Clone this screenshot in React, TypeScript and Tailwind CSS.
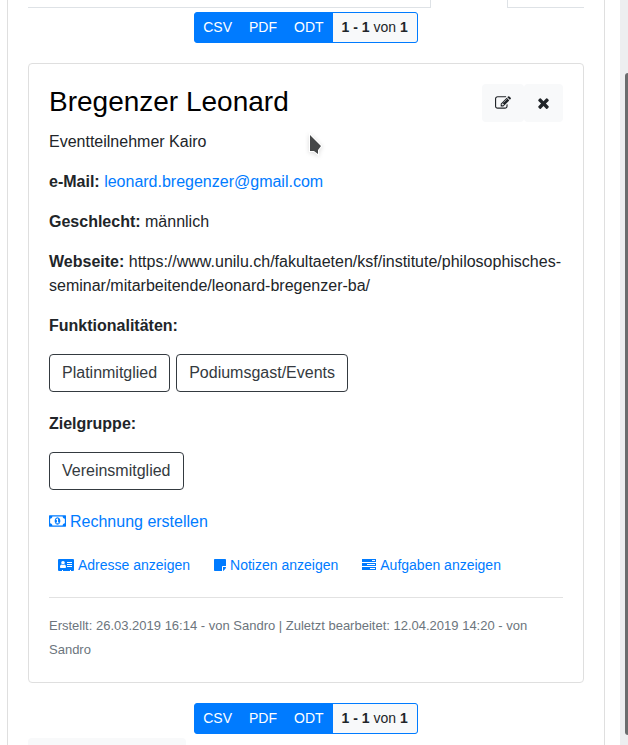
import type { ReactNode } from "react";

type IconProps = { className: string };

function EditIcon({ className }: IconProps) {
  return (
    <svg className={className} viewBox="0 0 1792 1792" fill="currentColor" aria-hidden="true">
      <path d="M888 1184l116-116-152-152-116 116v56h96v96h56zm440-720q-16-16-33 1l-350 350q-17 17-1 33t33-1l350-350q17-17 1-33zm80 594v190q0 119-84.5 203.5t-203.5 84.5h-832q-119 0-203.5-84.5t-84.5-203.5v-832q0-119 84.5-203.5t203.5-84.5h832q63 0 117 25 15 7 18 23 3 17-9 29l-49 49q-14 14-32 8-23-6-45-6h-832q-66 0-113 47t-47 113v832q0 66 47 113t113 47h832q66 0 113-47t47-113v-126q0-13 9-22l64-64q15-15 35-7t20 29zm-96-738l288 288-672 672h-288v-288zm444 132l-92 92-288-288 92-92q28-28 68-28t68 28l152 152q28 28 28 68t-28 68z" />
    </svg>
  );
}

function CloseIcon({ className }: IconProps) {
  return (
    <svg className={className} viewBox="192 0 1408 1792" fill="currentColor" aria-hidden="true">
      <path d="M1490 1322q0 40-28 68l-136 136q-28 28-68 28t-68-28l-294-294-294 294q-28 28-68 28t-68-28l-136-136q-28-28-28-68t28-68l294-294-294-294q-28-28-28-68t28-68l136-136q28-28 68-28t68 28l294 294 294-294q28-28 68-28t68 28l136 136q28 28 28 68t-28 68l-294 294 294 294q28 28 28 68z" />
    </svg>
  );
}

function MoneyIcon({ className }: IconProps) {
  return (
    <svg className={className} viewBox="0 0 1920 1792" fill="currentColor" aria-hidden="true">
      <path d="M768 1152h384v-96h-128v-448h-114l-148 137 77 80q42-37 55-57h2v288h-128v96zm512-256q0 70-21 142t-59.5 134-101.5 101-138 39-138-39-101.5-101-59.5-134-21-142 21-142 59.5-134 101.5-101 138-39 138 39 101.5 101 59.5 134 21 142zm512 256v-512q-106 0-181-75t-75-181h-1152q0 106-75 181t-181 75v512q106 0 181 75t75 181h1152q0-106 75-181t181-75zm128-832v1152q0 26-19 45t-45 19h-1792q-26 0-45-19t-19-45v-1152q0-26 19-45t45-19h1792q26 0 45 19t19 45z" />
    </svg>
  );
}

function AddressIcon({ className }: IconProps) {
  return (
    <svg className={className} viewBox="0 0 16 14" aria-hidden="true">
      <path
        fill="currentColor"
        d="M1 1h14a1 1 0 0 1 1 1v10a1 1 0 0 1-1 1h-2v-1h-1v1H5v-1H4v1H1a1 1 0 0 1-1-1V2a1 1 0 0 1 1-1z"
      />
      <circle cx="5" cy="4.8" r="1.8" fill="#fff" />
      <path fill="#fff" d="M2 9.2c0-1.700.7-2.700 1.600-2.700.8.7 2 .7 2.800 0C7.300 6.500 8 7.500 8 9.200c0 .5-.3.8-.8.8H2.800c-.5 0-.8-.3-.8-.8zM9 4h5v1H9zM9 6h5v1H9zM9 8h5v1H9z" />
    </svg>
  );
}

function NoteIcon({ className }: IconProps) {
  return (
    <svg className={className} viewBox="0 0 12 14" fill="currentColor" aria-hidden="true">
      <path d="M.8 1h10.400a.8.8 0 0 1 .8.8V8H8.800a.8.8 0 0 0-.8.8V13H.8a.8.8 0 0 1-.8-.8V1.800A.8.8 0 0 1 .8 1zM9 9h3c0 .8-.3 1.400-.8 2l-1.200 1.200c-.3.400-.7.6-1 .7z" />
    </svg>
  );
}

function TasksIcon({ className }: IconProps) {
  return (
    <svg className={className} viewBox="0 0 14 14" aria-hidden="true">
      <path fill="currentColor" d="M0 1h14v3H0zM0 5h14v3H0zM0 9h14v3H0z" />
      <path fill="#fff" d="M10 2h3v1h-3zM5 6h8v1H5zM8 10h5v1H8z" />
    </svg>
  );
}

const exportFormats = ["CSV", "PDF", "ODT"];

function ExportBar() {
  return (
    <div className="flex justify-center">
      <div className="flex gap-px overflow-hidden rounded-[3px] border border-[#007bff] bg-[#007bff] text-sm leading-[21px]">
        {exportFormats.map((format) => (
          <button key={format} type="button" className="px-2 py-1 text-white">
            {format}
          </button>
        ))}
        <span className="bg-[#f8f9fa] px-[9px] py-1">
          <b>1 - 1</b> von <b>1</b>
        </span>
      </div>
    </div>
  );
}

function Tag({ children }: { children: ReactNode }) {
  return (
    <button
      type="button"
      className="rounded border border-[#343a40] px-3 py-[6px] leading-6 text-[#343a40]"
    >
      {children}
    </button>
  );
}

function PanelLink({ icon, children }: { icon: ReactNode; children: ReactNode }) {
  return (
    <button
      type="button"
      className="flex items-center gap-1 border border-transparent px-2 py-1 text-sm leading-[21px] text-[#007bff]"
    >
      {icon}
      {children}
    </button>
  );
}

function ContactCard() {
  return (
    <article className="flex flex-col gap-4 rounded border border-[#dfdfdf] p-5">
      <div className="flex flex-col gap-2">
        <header className="flex items-start justify-between">
          <h4 className="text-[28px] leading-9 text-black">Bregenzer Leonard</h4>
          <div className="flex">
            <button
              type="button"
              aria-label="Bearbeiten"
              className="flex h-[38px] items-center rounded bg-[#f8f9fa] px-[13px]"
            >
              <EditIcon className="h-4 w-4" />
            </button>
            <button
              type="button"
              aria-label="Entfernen"
              className="flex h-[38px] items-center rounded bg-[#f8f9fa] px-[13px]"
            >
              <CloseIcon className="h-4 w-[13px]" />
            </button>
          </div>
        </header>
        <p>Eventteilnehmer Kairo</p>
      </div>
      <p>
        <b>e-Mail:</b>{" "}
        <a href="mailto:leonard.bregenzer@gmail.com" className="text-[#007bff]">
          leonard.bregenzer@gmail.com
        </a>
      </p>
      <p>
        <b>Geschlecht:</b> männlich
      </p>
      <p>
        <b>Webseite:</b>{" "}
        https://www.unilu.ch/fakultaeten/ksf/institute/philosophisches-seminar/mitarbeitende/leonard-bregenzer-ba/
      </p>
      <p className="font-bold">Funktionalitäten:</p>
      <div className="flex flex-wrap gap-[6px] pb-1">
        <Tag>Platinmitglied</Tag>
        <Tag>Podiumsgast/Events</Tag>
      </div>
      <p className="font-bold">Zielgruppe:</p>
      <div className="flex flex-wrap gap-[6px] pb-1">
        <Tag>Vereinsmitglied</Tag>
      </div>
      <a href="#rechnung" className="flex items-center gap-1 self-start text-[#007bff]">
        <MoneyIcon className="mb-0.5 h-4 w-[17px]" />
        Rechnung erstellen
      </a>
      <div className="flex flex-wrap gap-[6px]">
        <PanelLink icon={<AddressIcon className="mb-0.5 h-[14px] w-4" />}>Adresse anzeigen</PanelLink>
        <PanelLink icon={<NoteIcon className="mb-0.5 h-[14px] w-3" />}>Notizen anzeigen</PanelLink>
        <PanelLink icon={<TasksIcon className="mb-0.5 h-[14px] w-[14px]" />}>Aufgaben anzeigen</PanelLink>
      </div>
      <hr className="border-[#e2e2e2]" />
      <p className="text-[13px] leading-6 text-[#6c757d]">
        Erstellt: 26.03.2019 16:14 - von Sandro | Zuletzt bearbeitet: 12.04.2019 14:20 - von Sandro
      </p>
    </article>
  );
}

export default function App() {
  return (
    <div className="relative flex h-screen overflow-hidden bg-white font-['Liberation_Sans',Arial,sans-serif] text-base leading-6 text-[#212529]">
      <main className="mr-[15px] ml-[7px] min-w-0 flex-1 border-x border-[#dfdfdf] px-5">
        <div className="flex h-2">
          <div className="flex-1 border-r border-b border-[#dee2e6]" />
          <div className="w-[76px]" />
          <div className="w-[77px] border-b border-l border-[#dee2e6]" />
        </div>
        <div className="flex flex-col gap-5 pt-1">
          <ExportBar />
          <ContactCard />
          <ExportBar />
        </div>
        <div className="mt-1 h-10 w-[158px] rounded bg-[#f8f9fa]" />
      </main>
      <div className="flex w-2 flex-col items-end bg-[#edeef0] pt-[73px] pb-[10px]">
        <div className="w-[3px] flex-1 rounded-l-[3px] bg-[#6b6d6e]" />
      </div>
      <svg
        className="absolute top-[130px] left-[306px] h-[28px] w-[20px] drop-shadow-sm"
        viewBox="0 0 20 28"
        aria-hidden="true"
      >
        <path
          d="M4 5v16h4l4 3v-4l3-4z"
          fill="#454748"
          stroke="#fff"
          strokeWidth="2"
          paintOrder="stroke"
        />
      </svg>
    </div>
  );
}
